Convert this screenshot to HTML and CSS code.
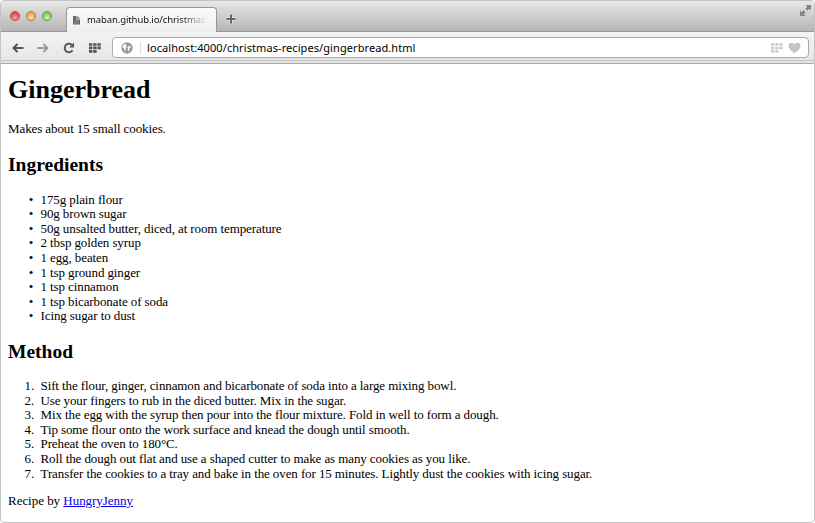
FILE: index.html
```html
<!DOCTYPE html>
<html lang="en">
<head>
<meta charset="utf-8">
<title>Gingerbread</title>
<link rel="stylesheet" href="styles.css">
</head>
<body>
<div class="window">
  <header class="titlebar">
    <div class="lights"><i class="light red"></i><i class="light amber"></i><i class="light green"></i></div>
    <div class="tab">
      <svg class="page-icon" width="9" height="10" viewBox="0 0 9 10"><path d="M1 1h3.500v3.500h3.500V9.500H1z" fill="#666"/><path d="M5.200 .8 8.200 3.800H5.200z" fill="#777"/><path d="M2 6h5M2 8h5" stroke="#aaa" stroke-width=".6"/></svg>
      <span class="tab-title">maban.github.io/christmas</span>
    </div>
    <svg class="plus" width="10" height="10" viewBox="0 0 10 10"><path d="M5 .5v9M.5 5h9" stroke="#fff" stroke-opacity=".5" stroke-width="3.500"/><path d="M5 .5v9M.5 5h9" stroke="#666" stroke-width="2"/></svg>
    <svg class="expand" width="13" height="13" viewBox="0 0 13 13"><path d="M6.500 1H12v5.500L10.300 4.800 8.400 6.700 6.400 4.700 8.300 2.800zM1 6.500 2.700 8.200 4.600 6.300 6.600 8.300 4.700 10.200 6.500 12H1z" fill="#858585"/></svg>
  </header>
  <nav class="toolbar">
    <svg class="back" width="12" height="10" viewBox="0 0 12 10"><path d="M11.500 5H2M5.500 1 1.500 5l4 4" fill="none" stroke="#555" stroke-width="2"/></svg>
    <svg class="forward" width="12" height="10" viewBox="0 0 12 10"><path d="M.5 5H10M6.500 1l4 4-4 4" fill="none" stroke="#999" stroke-width="1.800"/></svg>
    <svg class="reload" width="12" height="12" viewBox="0 0 12 12"><path d="M8.700 2.900A4.200 4.200 0 1 0 9.500 8.200" fill="none" stroke="#555" stroke-width="2"/><path d="M11 .6V5.500H6.200z" fill="#555"/></svg>
    <svg class="grid" width="12" height="10" viewBox="0 0 12 10"><path d="M0 1.500h12M0 4.900h12M0 8.300h7.600" stroke="#555" stroke-width="2.700" stroke-dasharray="3.400 .8"/></svg>
    <div class="address">
      <svg class="globe" width="12" height="12" viewBox="0 0 12 12"><circle cx="6" cy="6" r="5.700" fill="#999"/><path d="M1.600 4.200 3.500 2l2 .4-.6 1.500.8 1.300L4.600 6l.2 2-.9 1.300-.7-2.700L1.600 5.500zM6.300 4.800 8.400 3.900l1.800.9-.8 1-1-.1v2.600L7.400 9.600 6.900 6.800z" fill="#fff"/></svg>
      <span class="divider"></span>
      <span class="url">localhost:4000/christmas-recipes/gingerbread.html</span>
      <svg class="small-grid" width="12" height="10" viewBox="0 0 12 10"><path d="M0 1.500h12M0 4.900h12M0 8.300h7.600" stroke="#c9c9c9" stroke-width="2.500" stroke-dasharray="3.200 1"/></svg>
      <svg class="heart" width="13" height="12" viewBox="0 0 13 12"><path d="M6.500 11.500C4 9.300.5 7 .5 3.800.5.500 4.800-.2 6.500 2.500 8.200-.2 12.500.5 12.500 3.800 12.500 7 9 9.300 6.500 11.500z" fill="#c4c4c4"/></svg>
    </div>
  </nav>
  <main class="page">
    <h1>Gingerbread</h1>
    <p>Makes about 15 small cookies.</p>
    <h2>Ingredients</h2>
    <ul>
      <li>175g plain flour</li>
      <li>90g brown sugar</li>
      <li>50g unsalted butter, diced, at room temperature</li>
      <li>2 tbsp golden syrup</li>
      <li>1 egg, beaten</li>
      <li>1 tsp ground ginger</li>
      <li>1 tsp cinnamon</li>
      <li>1 tsp bicarbonate of soda</li>
      <li>Icing sugar to dust</li>
    </ul>
    <h2>Method</h2>
    <ol>
      <li>Sift the flour, ginger, cinnamon and bicarbonate of soda into a large mixing bowl.</li>
      <li>Use your fingers to rub in the diced butter. Mix in the sugar.</li>
      <li>Mix the egg with the syrup then pour into the flour mixture. Fold in well to form a dough.</li>
      <li>Tip some flour onto the work surface and knead the dough until smooth.</li>
      <li>Preheat the oven to 180°C.</li>
      <li>Roll the dough out flat and use a shaped cutter to make as many cookies as you like.</li>
      <li>Transfer the cookies to a tray and bake in the oven for 15 minutes. Lightly dust the cookies with icing sugar.</li>
    </ol>
    <p class="credit">Recipe by <a href="#">HungryJenny</a></p>
  </main>
</div>
</body>
</html>
```
FILE: styles.css
```css
* { box-sizing: border-box; }
body { margin: 0; background: #fff; overflow: hidden; }
svg { display: block; flex: none; }
.window {
  height: 523px;
  border: 1px solid #c4c4c4;
  border-radius: 4px;
  background: #fff;
  overflow: hidden;
}
.titlebar {
  display: flex;
  height: 31px;
  background: linear-gradient(#e9e9e9, #d8d8d8 30%, #b5b5b5);
  border-bottom: 1px solid #999;
}
.lights { display: flex; gap: 6px; padding: 10px 0 0 9px; width: 65px; }
.light { width: 10px; height: 10px; border-radius: 50%; border: 1px solid; }
.red { background: radial-gradient(circle at 50% 75%, #ffa0a0, #ec5055 60%); border-color: #a84a4c; }
.amber { background: radial-gradient(circle at 50% 75%, #ffe39a, #f1ad43 60%); border-color: #a87a3e; }
.green { background: radial-gradient(circle at 50% 75%, #d7f7ae, #8cc66a 60%); border-color: #63914e; }
.tab {
  display: flex;
  width: 151px;
  height: 25px;
  margin-top: 6px;
  padding: 7px 0 0 5px;
  border: 1px solid #999;
  border-bottom: 0;
  border-radius: 4px 4px 0 0;
  background: linear-gradient(#fafafa, #efefef);
}
.page-icon { margin-right: 6px; }
.tab-title {
  width: 122px;
  height: 16px;
  margin-top: -3px;
  white-space: nowrap;
  font: 9.500px/16px "Noto Sans", sans-serif;
  letter-spacing: -.1px;
  color: #111;
  -webkit-mask-image: linear-gradient(90deg, #000 75%, transparent);
  mask-image: linear-gradient(90deg, #000 75%, transparent);
}
.plus { margin: 13px 0 0 9px; }
.expand { margin: 3px 2px 0 auto; }
.toolbar {
  display: flex;
  align-items: center;
  height: 32px;
  padding: 2px 5px 0 11px;
  background: linear-gradient(#f3f3f3, #e6e6e6);
  border-bottom: 1px solid #aaa;
  box-shadow: inset 0 -2px #e4e4e4, inset 0 -3px #c4c4c4;
}
.forward { margin-left: 13px; }
.reload { margin-left: 14px; }
.grid { margin-left: 14px; }
.address {
  display: flex;
  align-items: center;
  flex: 1;
  height: 21px;
  margin: 0 0 2px 11px;
  padding: 0 7px 0 8px;
  border: 1px solid #aaa;
  border-radius: 4px;
  background: #fff;
}
.back, .forward, .reload, .grid { margin-bottom: 2px; }
.divider { width: 1px; height: 12px; margin: 0 6px 0 7px; background: #ddd; }
.url { font: 11px/19px "Noto Sans", sans-serif; letter-spacing: .08px; color: #000; white-space: nowrap; }
.small-grid { margin-left: auto; }
.heart { margin-left: 5px; }
.page {
  padding: 11px 7px 0;
  font: 13px/14.6px "Liberation Serif", serif;
  letter-spacing: -.1px;
  color: #000;
}
h1, h2 { letter-spacing: 0; }
h1 { margin: 0 0 17px; font-size: 26px; line-height: 30px; }
h2 { margin: 16px 0; font-size: 19.500px; line-height: 23px; }
p { margin: 0; }
ul, ol { margin: 0; padding-left: 32.500px; }
ul { padding-top: 1px; }
ul li::marker { content: "•\2002\200a"; }
ol li::marker { content: counter(list-item) ".\2002"; }
.credit { margin-top: 13px; letter-spacing: -.03px; }
a { color: #00e; text-decoration: underline; }
```
